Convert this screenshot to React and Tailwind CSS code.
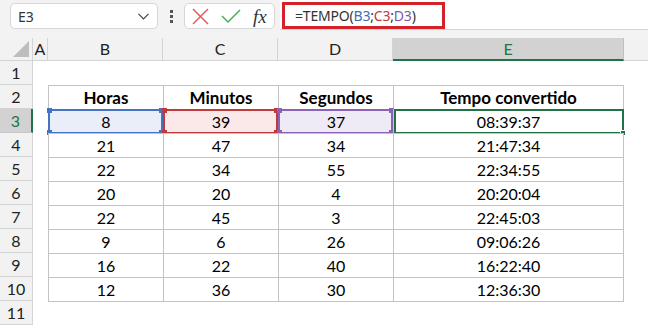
import React from "react";

const rows = [
  ["8", "39", "37", "08:39:37"],
  ["21", "47", "34", "21:47:34"],
  ["22", "34", "55", "22:34:55"],
  ["20", "20", "4", "20:20:04"],
  ["22", "45", "3", "22:45:03"],
  ["9", "6", "26", "09:06:26"],
  ["16", "22", "40", "16:22:40"],
  ["12", "36", "30", "12:36:30"],
];

function RowHead({ n, sel }) {
  return sel ? (
    <div className="h-[24px] bg-[#d2d2d2] border-b border-[#c8c8c8] border-r-2 border-r-[#217346] flex items-center justify-center text-[16px] text-[#217346]">
      {n}
    </div>
  ) : (
    <div className="h-[24px] bg-[#f2f2f2] border-b border-r border-[#d4d4d4] flex items-center justify-center text-[16px] text-[#222]">
      {n}
    </div>
  );
}

function Corners({ color }) {
  const base = "absolute w-[5px] h-[5px] " + color;
  return (
    <>
      <div className={base + " -top-[3px] -left-[3px]"} />
      <div className={base + " -top-[3px] -right-[3px]"} />
      <div className={base + " -bottom-[3px] -left-[3px]"} />
      <div className={base + " -bottom-[3px] -right-[3px]"} />
    </>
  );
}

function Cell({ children, bold, last, kind }) {
  let fill = "bg-white";
  if (kind === "b") fill = "bg-[#e9eef8]";
  if (kind === "c") fill = "bg-[#fbe8e9]";
  if (kind === "d") fill = "bg-[#efebf6]";
  return (
    <div
      className={
        "relative h-[24px] border-l border-t border-[#c3c3c3] flex items-center justify-center text-black " +
        fill +
        (bold ? " font-bold text-[17px]" : " text-[16px]") +
        (last ? " border-r" : "")
      }
    >
      {children}
      {kind === "b" && (
        <div className="absolute -top-px -left-px right-0 -bottom-px border-2 border-[#4472c4]">
          <Corners color="bg-[#4472c4]" />
        </div>
      )}
      {kind === "c" && (
        <div className="absolute -top-px -left-px right-0 -bottom-px border-2 border-[#c0393b]">
          <Corners color="bg-[#c0393b]" />
        </div>
      )}
      {kind === "d" && (
        <div className="absolute -top-px -left-px right-0 -bottom-px border-2 border-[#8a63b5]">
          <Corners color="bg-[#8a63b5]" />
        </div>
      )}
      {kind === "e" && (
        <div className="absolute -top-px left-0 -right-px -bottom-px border-2 border-[#217346]">
          <div className="absolute -right-[4px] -bottom-[4px] w-[6px] h-[6px] bg-[#217346] border border-white" />
        </div>
      )}
    </div>
  );
}

export default function App() {
  return (
    <div className="w-[648px] h-[326px] overflow-hidden bg-white font-['Lato',sans-serif]">
      {/* formula bar */}
      <div className="h-[38px] bg-[#f3f3f3] flex items-start">
        <div className="ml-[10px] mt-[3px] w-[148px] h-[26px] rounded-[5px] border border-[#d6d6d6] bg-white flex items-center justify-between pl-[7px] pr-[8px] font-['Noto_Sans',sans-serif] text-[14px] text-[#333]">
          <span>E3</span>
          <svg width="11" height="7" viewBox="0 0 11 7">
            <polyline points="0.5,0.8 5.5,5.8 10.5,0.8" fill="none" stroke="#444" strokeWidth="1.2" />
          </svg>
        </div>
        <div className="w-[26px] h-[32px] flex flex-col items-center justify-center gap-[2px]">
          <div className="w-[3px] h-[3px] bg-[#555]" />
          <div className="w-[3px] h-[3px] bg-[#555]" />
          <div className="w-[3px] h-[3px] bg-[#555]" />
        </div>
        <div className="mt-[3px] w-[91px] h-[26px] rounded-[5px] border border-[#d6d6d6] bg-white flex items-center pl-[7px]">
          <svg width="17" height="17" viewBox="0 0 17 17">
            <line x1="1" y1="1" x2="16" y2="16" stroke="#e05a5a" strokeWidth="1.5" />
            <line x1="16" y1="1" x2="1" y2="16" stroke="#e05a5a" strokeWidth="1.5" />
          </svg>
          <svg width="20" height="15" viewBox="0 0 20 15" className="ml-[12px]">
            <polyline points="1,7 7,13 19,1" fill="none" stroke="#4caf50" strokeWidth="1.5" />
          </svg>
          <span className="ml-[12px] font-['Liberation_Serif',serif] italic text-[19px] leading-none text-[#333]">
            fx
          </span>
        </div>
        <div className="ml-[5px] flex-1 h-[30px] bg-white border-b border-[#d6d6d6]">
          <div className="ml-[2px] mt-[2px] w-[163px] h-[27px] border-[3px] border-[#d3222a] flex items-center pl-[10px] font-['Noto_Sans',sans-serif] text-[14px] text-[#333] tracking-[-0.2px]">
            <span>=TEMPO(</span>
            <span className="text-[#3e6fb4]">B3</span>
            <span>;</span>
            <span className="text-[#c0393b]">C3</span>
            <span>;</span>
            <span className="text-[#7c5aa8]">D3</span>
            <span>)</span>
          </div>
        </div>
      </div>

      {/* grid */}
      <div className="grid grid-cols-[33px_15px_115px_115px_115px_231px_1fr]">
        {/* header row */}
        <div className="relative h-[23px] bg-[#f2f2f2] border-b border-r border-[#d4d4d4]">
          <svg width="17" height="17" viewBox="0 0 17 17" className="absolute left-[13px] top-[3px]">
            <polygon points="16,0 16,16 0,16" fill="#bdbdbd" />
          </svg>
        </div>
        {["A", "B", "C", "D"].map((l) => (
          <div
            key={l}
            className="h-[23px] bg-[#f2f2f2] border-b border-r border-[#d4d4d4] flex items-center justify-center text-[16px] text-[#222]"
          >
            {l}
          </div>
        ))}
        <div className="h-[23px] bg-[#d2d2d2] border-b-2 border-[#217346] border-r border-r-[#c0c0c0] flex items-center justify-center text-[16px] text-[#217346]">
          E
        </div>
        <div className="h-[23px] bg-[#f2f2f2] border-b border-[#d4d4d4]" />

        {/* row 1 */}
        <RowHead n="1" />
        <div className="h-[24px]" />
        <div className="h-[24px]" />
        <div className="h-[24px]" />
        <div className="h-[24px]" />
        <div className="h-[24px]" />
        <div className="h-[24px]" />

        {/* row 2 */}
        <RowHead n="2" />
        <div className="h-[24px]" />
        <Cell bold>Horas</Cell>
        <Cell bold>Minutos</Cell>
        <Cell bold>Segundos</Cell>
        <Cell bold last>Tempo convertido</Cell>
        <div className="h-[24px]" />

        {rows.map((r, i) => {
          const n = i + 3;
          const sel = n === 3;
          return (
            <React.Fragment key={n}>
              <RowHead n={String(n)} sel={sel} />
              <div className="h-[24px]" />
              <Cell kind={sel ? "b" : undefined}>{r[0]}</Cell>
              <Cell kind={sel ? "c" : undefined}>{r[1]}</Cell>
              <Cell kind={sel ? "d" : undefined}>{r[2]}</Cell>
              <Cell kind={sel ? "e" : undefined} last>
                {r[3]}
              </Cell>
              <div className="h-[24px]" />
            </React.Fragment>
          );
        })}

        {/* row 11 */}
        <RowHead n="11" />
        <div className="h-[24px] border-t border-[#c3c3c3] col-start-3 col-span-4" />
      </div>
    </div>
  );
}
